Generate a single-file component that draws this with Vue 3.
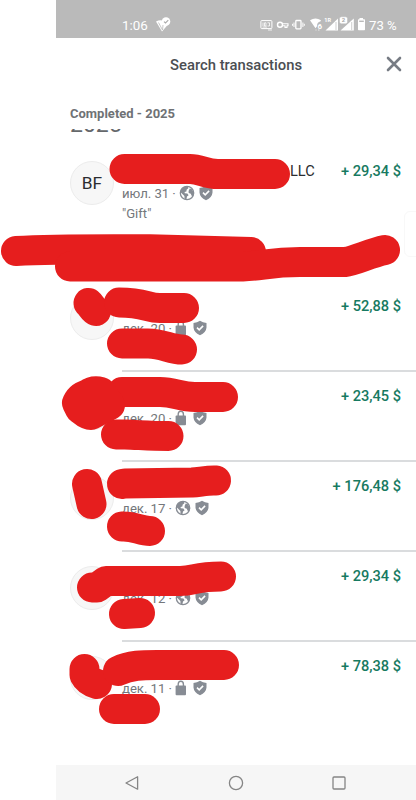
<template>
  <div class="page">
    <div class="phone">
      <div class="status-bar">
        <span class="clock">1:06</span>
        <svg class="notice" width="16" height="16" viewBox="0 0 16 16">
          <path d="M1 4.5 Q5 2.5 9 4 L13 7.5 L7 14.5 Z" fill="#fff" />
          <path d="M3.5 5.5 L7.5 13 L8 8" fill="none" stroke="#bababa" stroke-width="0.8" />
          <circle cx="11" cy="4.5" r="4.3" fill="#fff" />
          <path d="M9 4.6 L10.5 6 L13.3 3.2" fill="none" stroke="#aaa" stroke-width="1.1" />
        </svg>
        <svg class="indicators" width="106" height="18" viewBox="0 0 106 18">
          <g fill="none" stroke="#fff">
            <rect x="0.9" y="4.6" width="11" height="8" rx="0.8" stroke-width="1" />
            <path d="M3 6.5 V10 M4.5 6.8 H6 V10 H4.5 Z M7.5 6.8 H9.5 V10 H7.5 M2.5 11 H7 M8 14 H12" stroke-width="0.8" />
            <circle cx="20" cy="8.7" r="2.5" stroke-width="1.4" />
            <path d="M22.3 7.8 H28 V9.8 H27 V11.4 H25 V9.8 H22.3" stroke-width="1.1" />
            <rect x="35.8" y="4.5" width="5.2" height="8.4" rx="0.8" stroke-width="1.3" />
            <path d="M34 6.5 V11 M32.6 7.8 V9.8 M42.9 6.5 V11 M44.3 7.8 V9.8" stroke-width="1" />
          </g>
          <g fill="#fff">
            <path d="M50 4.2 Q55.5 1 61 4.2 L60.3 5.6 Q57 6 57 10.3 L55.5 12.2 Z" />
            <text x="57.4" y="12.6" font-size="8" font-weight="700">6</text>
            <path d="M55.5 14 h1 M58 14 h1.5" stroke="#fff" stroke-width="0.7" />
            <text x="64.2" y="6" font-size="5.6" font-weight="700">1R</text>
            <path d="M65.5 14.4 L78 2.6 V14.4 Z" />
            <path d="M80.5 14.4 L93.8 2.6 V14.4 Z" />
            <path d="M76 6 V14 M91.7 6 V14" stroke="#bababa" stroke-width="0.7" />
            <rect x="79.5" y="0.8" width="8" height="7" rx="1.8" stroke="#bababa" stroke-width="0.5" />
            <text x="81.8" y="6.4" font-size="6" font-weight="700" class="sim">2</text>
            <path d="M99.5 2 H103 V3.2 H104.3 Q105 3.2 105 4 V13.4 Q105 14.2 104.3 14.2 H98.7 Q98 14.2 98 13.4 V4 Q98 3.2 98.7 3.2 H99.5 Z" />
            <path d="M99.2 5.3 H103.8" stroke="#bababa" stroke-width="1.4" />
          </g>
        </svg>
        <span class="battery">73 %</span>
      </div>

      <div class="header">
        <h1>Search transactions</h1>
        <svg class="close" width="16" height="16" viewBox="0 0 16 16">
          <path d="M2 2 L14 14 M14 2 L2 14" stroke="#777c84" stroke-width="2.6" stroke-linecap="round" />
        </svg>
      </div>

      <div class="sticky-title">Completed - 2025</div>
      <div class="year-clip"><span>2025</span></div>

      <div class="list">
        <div
          v-for="(item, index) in items"
          :key="index"
          class="row"
          :class="{ 'row-first': index === 0 }"
        >
          <div class="avatar">{{ item.initials }}</div>
          <div class="content">
            <div class="main-line">
              <span class="name">{{ item.name }}</span>
              <span class="amount">{{ item.amount }}</span>
            </div>
            <div class="meta">
              <span class="date">{{ item.date }} ·</span>
              <svg v-if="item.isPublic" class="globe" width="16" height="16" viewBox="0 0 16 16">
                <circle cx="8" cy="8" r="6.7" fill="#fff" stroke="#878c94" stroke-width="1.3" />
                <path d="M2 4.5 Q4 1.5 8.7 1.3 L9.4 3.2 L7.6 4.7 L7.4 6.4 L5.6 7 L5.8 8.3 L8.4 8.5 L9.6 10.2 L8 11.6 L7.4 14.6 Q5.8 14.3 5.5 13.2 L5.4 10.9 L1.6 7.2 Z" fill="#878c94" />
                <path d="M10.7 3.4 L13 4.3 L14.6 7.5 L14 11 L12.6 10.8 L11.8 8.8 L9.7 7.9 L9.6 6 Z" fill="#878c94" />
              </svg>
              <svg v-else class="lock" width="15" height="16" viewBox="0 0 15 16">
                <path d="M4.2 7 V4.3 Q4.2 1.3 6.8 1.3 Q9.4 1.3 9.4 4.3 V7" fill="none" stroke="#878c94" stroke-width="1.4" />
                <rect x="1.6" y="5.6" width="10.4" height="9.6" rx="0.9" fill="#878c94" />
              </svg>
              <svg class="shield" width="14" height="16" viewBox="0 0 14 16">
                <path d="M7 0.8 Q9.8 2.7 13.5 3 V7.5 Q13.2 12.4 7 15.2 Q0.8 12.4 0.5 7.5 V3 Q4.2 2.7 7 0.8 Z" fill="#878c94" />
                <path d="M4 7.7 L6.2 9.8 L10.1 5.9" fill="none" stroke="#fff" stroke-width="1.6" />
              </svg>
            </div>
            <div v-if="item.note" class="note">{{ item.note }}</div>
          </div>
        </div>
      </div>

      <div class="nav-bar">
        <svg width="16" height="16" viewBox="0 0 16 16">
          <path d="M13.6 1.8 V14.2 L2 8 Z" />
        </svg>
        <svg width="16" height="16" viewBox="0 0 16 16">
          <circle cx="8" cy="8" r="6.6" />
        </svg>
        <svg width="16" height="16" viewBox="0 0 16 16">
          <rect x="2" y="2" width="12" height="12" rx="1" />
        </svg>
      </div>
    </div>

    <div class="side-handle"></div>

    <!-- marker strokes over private data -->
    <svg class="marker" width="416" height="800" viewBox="0 0 416 800">
      <path v-for="(d, index) in strokes" :key="index" :d="d" />
      <path class="blob" d="M77 403 C80 397 83 396 88 394 C92 391 97 391 101 392 L110 405 L91 415 C86 415 83 411 80 409 Z" />
    </svg>
  </div>
</template>

<script setup>
const items = [
  { initials: "BF", name: "LLC", amount: "+ 29,34 $", date: "июл. 31", isPublic: true, note: '"Gift"' },
  { amount: "+ 52,88 $", date: "дек. 20", isPublic: false },
  { amount: "+ 23,45 $", date: "дек. 20", isPublic: false },
  { amount: "+ 176,48 $", date: "дек. 17", isPublic: true },
  { amount: "+ 29,34 $", date: "дек. 12", isPublic: true },
  { amount: "+ 78,38 $", date: "дек. 11", isPublic: false },
];

const strokes = [
  "M124.5 169 H190 C201 169 205 174 218 174 H275",
  "M16 251 C50 249 100 249 150 249.3 L251 252",
  "M70 266.5 H243 C262 266 270 262 300 262 H345 C355 261 370 253 385 250",
  "M88.5 303 C91 305 93 310 96 311",
  "M119 302.5 C145 302.5 147 308 160 308 H184",
  "M122 343.5 H148 C163 343.5 170 349.5 182 349.5",
  "M122 392 H160 C175 392 180 397 195 397 H223",
  "M116 434.5 H125 C140 435 150 436 168.5 436",
  "M87 484 L91.5 504",
  "M122 484 L125 483.5 L192 482.5 C200 482 208 480 216 480.5",
  "M122 526.5 C135 526 140 531 150 531",
  "M92 587.5 H97 L106 581 H180 C195 581 195 576.5 221 576.5",
  "M124 614 L140 613",
  "M84.5 669 V675 C86 678 90 682 97 684",
  "M118 671 C130 665 143 665 157 665 H224",
  "M114 709 H145",
];
</script>

<style>
body {
  margin: 0;
  background: #fff;
}
</style>

<style scoped>
.page {
  position: relative;
  width: 416px;
  height: 800px;
  padding-left: 56px;
  box-sizing: border-box;
  overflow: hidden;
  background: #fff;
  font-family: Roboto, "Liberation Sans", sans-serif;
}

.phone {
  display: flex;
  flex-direction: column;
  width: 360px;
  height: 800px;
}

.status-bar {
  display: flex;
  align-items: center;
  height: 38px;
  padding: 12px 19px 0 66px;
  box-sizing: border-box;
  background: #bababa;
  color: #fff;
  font-size: 13.4px;
}

.clock {
  width: 33px;
}

.indicators {
  margin-left: 89px;
}

.sim {
  fill: #aaa;
}

.battery {
  margin-left: 3px;
  font-size: 13.2px;
  white-space: nowrap;
}

.header {
  display: flex;
  align-items: center;
  justify-content: flex-end;
  height: 52px;
  padding-right: 14px;
}

.header h1 {
  margin: 1px 84px 0 0;
  color: #4b4e52;
  font-size: 14.8px;
  font-weight: 500;
  line-height: 20px;
  white-space: nowrap;
}

.sticky-title {
  height: 39px;
  padding: 16px 0 0 14px;
  box-sizing: border-box;
  color: #6f7275;
  font-size: 13px;
  font-weight: 700;
  line-height: 16px;
}

.year-clip {
  display: flex;
  align-items: flex-end;
  height: 4px;
  padding-left: 14px;
  overflow: hidden;
  color: #65686b;
  font-size: 23px;
  font-weight: 400;
  line-height: 17px;
}

.list {
  flex: 1;
  padding-top: 13px;
}

.row {
  display: flex;
  height: 90px;
  padding-left: 14px;
}

.row-first {
  margin-bottom: 45px;
}

.avatar {
  display: flex;
  align-items: center;
  justify-content: center;
  width: 44px;
  height: 44px;
  margin-top: 15px;
  box-sizing: border-box;
  border: 1px solid #ececec;
  border-radius: 50%;
  background: #f7f7f7;
  color: #2b2d30;
  font-size: 17.3px;
}

.content {
  flex: 1;
  height: 91px;
  margin-left: 8px;
  padding: 15px 15px 0 0;
  border-bottom: 2px solid #dadcde;
  box-sizing: border-box;
}

.row-first .content,
.row:last-child .content {
  border-bottom: none;
}

.main-line {
  display: flex;
  height: 20px;
  padding-left: 168px;
  line-height: 20px;
}

.name {
  color: #2b2d30;
  font-size: 14.6px;
}

.amount {
  margin-left: auto;
  color: #177a61;
  font-size: 14.6px;
  font-weight: 500;
  white-space: nowrap;
}

.meta {
  display: flex;
  align-items: center;
  height: 24px;
}

.date {
  width: 51px;
  color: #74777b;
  font-size: 13.2px;
  letter-spacing: -0.05px;
  white-space: nowrap;
}

.row-first .date {
  width: 55px;
}

.globe,
.lock,
.shield {
  flex: none;
}

.globe {
  margin-left: 2px;
}

.lock {
  margin-left: 1px;
}

.shield {
  margin-left: 4px;
}

.note {
  margin-top: 1px;
  color: #74777b;
  font-size: 13.1px;
  line-height: 16px;
}

.nav-bar {
  display: flex;
  align-items: center;
  justify-content: space-between;
  height: 35px;
  padding: 0 69px 0 68px;
  background: #f6f6f6;
}

.nav-bar svg {
  fill: none;
  stroke: #858585;
  stroke-width: 1.3;
  stroke-linejoin: round;
}

.side-handle {
  position: absolute;
  top: 211px;
  left: 404px;
  width: 20px;
  height: 46px;
  box-sizing: border-box;
  border: 1px solid #f8f8f8;
  border-radius: 6px;
}

.marker {
  position: absolute;
  top: 0;
  left: 0;
  fill: none;
  stroke: #e61e1e;
  stroke-width: 30;
  stroke-linecap: round;
  stroke-linejoin: round;
}

.blob {
  fill: #e61e1e;
}
</style>
